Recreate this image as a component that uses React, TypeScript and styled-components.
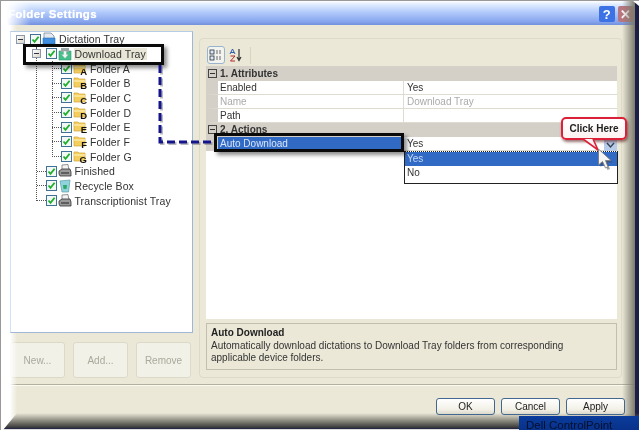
import React from "react"
import styled, { createGlobalStyle } from "styled-components"

const GlobalStyle = createGlobalStyle`
  html, body {
    margin: 0;
    padding: 0;
    background: #fff;
  }
`

const Win = styled.div`
  position: relative;
  display: flex;
  flex-direction: column;
  width: 639px;
  height: 430px;
  overflow: hidden;
  background: #ebe8d8;
  font-family: "Liberation Sans", Arial, sans-serif;
  font-size: 10px;
  color: #222;
  filter: blur(0.3px);
`

const TitleBar = styled.div`
  display: flex;
  align-items: center;
  flex: none;
  height: 25px;
  box-sizing: border-box;
  padding: 2px 5px 0 7px;
  border-top: 1px solid #999;
  border-left: 1px solid #999;
  background:
    linear-gradient(90deg, #fff 6px, rgba(255, 255, 255, 0) 30px),
    linear-gradient(#ffffff 0%, #e4eeff 12%, #b4ccfb 45%, #88a6ee 85%, #7390dc 100%);
  color: #fff;
  font-size: 11.5px;
  font-weight: bold;
  letter-spacing: 0.35px;
  text-shadow: 0 0 1px rgba(255, 255, 255, 0.9);
`

const TitleText = styled.span`
  flex: 1;
`

const CaptionButton = styled.div<{ $tone: string }>`
  display: flex;
  align-items: center;
  justify-content: center;
  width: 16px;
  height: 16px;
  margin-left: 3px;
  border-radius: 2px;
  background: ${p => p.$tone};
  font-size: 13px;
  font-weight: bold;
  text-shadow: none;
`

const Main = styled.div`
  display: flex;
  flex: none;
  height: 353px;
  box-sizing: border-box;
  padding: 6px 0 0 10px;
  gap: 6px;
`

const LeftColumn = styled.div`
  display: flex;
  flex-direction: column;
  width: 183px;
  gap: 9px;
`

const TreeBox = styled.div`
  position: relative;
  z-index: 2;
  height: 302px;
  box-sizing: border-box;
  border: 1px solid #9db8d6;
  border-left-color: #cfe2f6;
  border-top-color: #b7cde4;
  background: #fff;
  font-size: 10.5px;
`

const Branch = styled.div<{ $line: number; $bottom: number }>`
  position: relative;

  &::before {
    content: "";
    position: absolute;
    left: ${p => p.$line}px;
    top: 0;
    bottom: ${p => p.$bottom}px;
    border-left: 1px dotted #555;
  }
`

const Row = styled.div<{ $level: number }>`
  position: relative;
  display: flex;
  align-items: center;
  height: 14.67px;
  padding-left: ${p => 5 + p.$level * 15.5}px;
  white-space: nowrap;
`

const Slot = styled.div<{ $leaf?: boolean }>`
  display: flex;
  align-items: center;
  flex: none;
  width: 14px;
  height: 1px;
  box-sizing: border-box;
  ${p => (p.$leaf ? "margin-left: 5px; width: 9px; border-top: 1px dotted #555;" : "")}
`

const Expander = styled.div`
  display: flex;
  align-items: center;
  justify-content: center;
  flex: none;
  width: 9px;
  height: 9px;
  box-sizing: border-box;
  border: 1px solid #8a98a8;
  background: linear-gradient(135deg, #fff, #d8d4c8);

  &::after {
    content: "";
    width: 5px;
    height: 1px;
    background: #334;
  }
`

const Check = styled.div`
  display: flex;
  align-items: center;
  justify-content: center;
  flex: none;
  width: 11px;
  height: 11px;
  box-sizing: border-box;
  border: 1px solid #3f7296;
  background: #f4f8f4;
`

const IconWrap = styled.div`
  position: relative;
  flex: none;
  width: 14px;
  height: 14px;
  margin-left: 1px;
`

const Letter = styled.span`
  position: absolute;
  right: 0;
  bottom: -1px;
  color: #111;
  font-size: 9.5px;
  font-weight: bold;
  line-height: 10px;
`

const Label = styled.span<{ $mark?: boolean }>`
  margin-left: 2px;
  padding: 0 1px;
  letter-spacing: 0.1px;
  color: #333;
  background: ${p => (p.$mark ? "#e8e6d6" : "transparent")};
`

const ButtonRow = styled.div`
  display: flex;
  justify-content: flex-end;
  gap: 8px;
  padding-right: 2px;
`

const GhostButton = styled.div`
  display: flex;
  align-items: center;
  justify-content: center;
  width: 55px;
  height: 36px;
  box-sizing: border-box;
  border: 1px solid #dcd9c8;
  border-radius: 3px;
  background: #f2f1e8;
  color: #aaa99c;
`

const Panel = styled.div`
  display: flex;
  flex-direction: column;
  width: 423px;
  height: 340px;
  box-sizing: border-box;
  margin-top: 7px;
  padding: 5px 4px 7px 6px;
  border: 1px solid #dedac8;
  border-radius: 4px;
`

const Toolbar = styled.div`
  display: flex;
  align-items: flex-end;
  flex: none;
  height: 22px;
  gap: 2px;
  padding: 0 0 2px 1px;
  box-sizing: border-box;
`

const ToolButton = styled.div<{ $on?: boolean }>`
  display: flex;
  align-items: center;
  justify-content: center;
  width: 16px;
  height: 16px;
  border: 1px solid ${p => (p.$on ? "#9ab4d0" : "transparent")};
  border-radius: 3px;
  background: ${p => (p.$on ? "#f4f4ee" : "transparent")};
`

const ToolDivider = styled.div`
  width: 1px;
  height: 17px;
  margin-left: 3px;
  background: #d8d4c2;
`

const Grid = styled.div`
  flex: none;
  height: 253px;
  background: #fff;
`

const CategoryRow = styled.div`
  display: flex;
  align-items: center;
  height: 14.5px;
  gap: 3px;
  padding-left: 2px;
  background: #d4d0c8;
  font-weight: bold;
  color: #333;
`

const SmallBox = styled.div`
  display: flex;
  align-items: center;
  justify-content: center;
  width: 7px;
  height: 7px;
  border: 1px solid #444;

  &::after {
    content: "";
    width: 5px;
    height: 1px;
    background: #333;
  }
`

const PropRow = styled.div`
  display: flex;
  height: 14px;
  box-sizing: border-box;
  border-left: 12px solid #d4d0c8;
  border-bottom: 1px solid #dedbd0;
`

const PropName = styled.div<{ $dim?: boolean; $selected?: boolean }>`
  width: 186px;
  box-sizing: border-box;
  padding-left: 2px;
  line-height: 13px;
  border-right: 1px solid #dedbd0;
  color: ${p => (p.$selected ? "#d8e4f8" : p.$dim ? "#aaa" : "#333")};
  background: ${p => (p.$selected ? "#316ac5" : "transparent")};
`

const PropValue = styled.div<{ $dim?: boolean }>`
  flex: 1;
  padding-left: 3px;
  line-height: 13px;
  color: ${p => (p.$dim ? "#aaa" : "#333")};
`

const Description = styled.div`
  flex: none;
  height: 47px;
  box-sizing: border-box;
  margin-top: 4px;
  padding: 3px 4px;
  border: 1px solid #c2bfae;
  line-height: 12.5px;
  color: #333;
`

const DescriptionTitle = styled.div`
  font-weight: bold;
  color: #222;
`

const Separator = styled.div`
  flex: none;
  height: 2px;
  margin-top: 6px;
  background: linear-gradient(#b4b09e 50%, #fbfaf2 50%);
`

const Footer = styled.div`
  display: flex;
  justify-content: flex-end;
  gap: 6px;
  padding: 12px 14px 0 0;
`

const DialogButton = styled.div`
  position: relative;
  z-index: 3;
  display: flex;
  align-items: center;
  justify-content: center;
  width: 59px;
  height: 17px;
  box-sizing: border-box;
  border: 1px solid #42688f;
  border-radius: 3px;
  background: linear-gradient(#ffffff, #f2f0e6 70%, #dcd8cc);
  color: #222;
`

/* everything below sits over the dialog: annotations and the screenshot's edge */

const ValueArrow = styled.div`
  position: absolute;
  left: 604px;
  top: 139px;
  display: flex;
  align-items: center;
  justify-content: center;
  width: 13px;
  height: 12px;
  background: #b8cbe8;
`

const DropList = styled.div`
  position: absolute;
  left: 404px;
  top: 151px;
  width: 212px;
  height: 31px;
  border: 1px solid #222;
  border-top-style: dotted;
  background: #fff;
`

const DropItem = styled.div<{ $active?: boolean }>`
  height: 14px;
  padding-left: 2px;
  line-height: 14px;
  color: ${p => (p.$active ? "#c8d8f4" : "#333")};
  background: ${p => (p.$active ? "#316ac5" : "transparent")};
`

const Highlight = styled.div<{ $x: number; $y: number; $w: number; $h: number }>`
  position: absolute;
  z-index: 4;
  left: ${p => p.$x}px;
  top: ${p => p.$y}px;
  width: ${p => p.$w}px;
  height: ${p => p.$h}px;
  box-sizing: border-box;
  border: 3px solid #0a0a0a;
  box-shadow: 3px 3px 4px rgba(0, 0, 0, 0.45);
`

const Connector = styled.svg`
  position: absolute;
  z-index: 4;
  left: 150px;
  top: 60px;
`

const Callout = styled.div`
  position: absolute;
  left: 561px;
  top: 117px;
  display: flex;
  align-items: center;
  justify-content: center;
  width: 66px;
  height: 23px;
  box-sizing: border-box;
  border: 2px solid #dc2038;
  border-radius: 5px;
  background: linear-gradient(#ffffff, #fdf2f2);
  box-shadow: 1px 2px 3px rgba(70, 0, 0, 0.55);
  font-weight: bold;
  color: #222;
`

const CalloutTail = styled.svg`
  position: absolute;
  left: 581px;
  top: 137px;
`

const Pointer = styled.svg`
  position: absolute;
  left: 597px;
  top: 147px;
`

const LeftFade = styled.div`
  position: absolute;
  left: 0;
  top: 25px;
  bottom: 0;
  width: 16px;
  border-left: 1px solid #999;
  background: linear-gradient(90deg, #fff 55%, rgba(255, 255, 255, 0));
  pointer-events: none;
`

const RightShade = styled.div`
  position: absolute;
  right: 0;
  top: 1px;
  bottom: 0;
  width: 17px;
  background: linear-gradient(90deg, rgba(110, 110, 98, 0), #7c7b6c 76%, #1c2048 78%, #1a1e44);
`

const CornerCut = styled.div`
  position: absolute;
  right: 0;
  top: 1px;
  width: 6px;
  height: 5px;
  background: #fff;
  clip-path: polygon(0 0, 100% 0, 100% 100%);
`

const BottomShade = styled.div`
  position: absolute;
  left: 3px;
  right: 0;
  bottom: 0;
  height: 17px;
  background: linear-gradient(rgba(80, 80, 70, 0), #77766c 55%, #3a3a3c 85%, #1c2048 94%, #ddd 94%);
  clip-path: polygon(14px 0, 100% 0, 100% 100%, 0 100%);
`

const TaskTip = styled.div`
  position: absolute;
  z-index: 3;
  right: 0;
  bottom: 0;
  width: 120px;
  height: 14px;
  box-sizing: border-box;
  padding: 2px 0 0 7px;
  overflow: hidden;
  background: linear-gradient(#0a3c9c, #08328a);
  color: #04102e;
  font-size: 11.5px;
  line-height: 14px;
  white-space: nowrap;
`

const CheckMark = () => (
  <svg width="9" height="9" viewBox="0 0 9 9">
    <path d="M1.5 4.5 L3.5 6.8 L7.6 1.8" fill="none" stroke="#1fae2e" strokeWidth="1.8" />
  </svg>
)

const FolderIcon = ({ letter }: { letter: string }) => (
  <IconWrap>
    <svg width="13" height="13" viewBox="0 0 13 13">
      <path d="M1 3 L1 2 L5 2 L6 3 L12 3 L12 11 L1 11 Z" fill="#f4cf60" stroke="#d2a63a" strokeWidth="0.7" />
      <path d="M1 5 L12 5" stroke="#fff0b8" strokeWidth="1.2" />
    </svg>
    <Letter>{letter}</Letter>
  </IconWrap>
)

const TrayIcon = ({ kind }: { kind: string }) => (
  <IconWrap>
    {kind === "dictation" && (
      <svg width="14" height="14" viewBox="0 0 14 14">
        <path d="M2 1 L9 1 L12 4 L12 8 L2 8 Z" fill="#e4e8f0" stroke="#7a8aa0" strokeWidth="0.8" />
        <path d="M1 6 L13 6 L13 12 L1 12 Z" fill="#3f8fe0" stroke="#2a6cb0" strokeWidth="0.6" />
      </svg>
    )}
    {kind === "download" && (
      <svg width="14" height="14" viewBox="0 0 14 14">
        <path d="M1 4 L13 4 L13 13 L1 13 Z" fill="#45c08a" stroke="#2c9a70" strokeWidth="0.6" />
        <path d="M3 1 L11 1 L11 5 L3 5 Z" fill="#9aa8a8" />
        <path d="M5.5 4 L8.5 4 L8.5 7.5 L10.5 7.5 L7 11.5 L3.5 7.5 L5.5 7.5 Z" fill="#f2f6f2" stroke="#7aa89a" strokeWidth="0.4" />
      </svg>
    )}
    {kind === "printer" && (
      <svg width="14" height="14" viewBox="0 0 14 14">
        <path d="M4 1 L10 0.5 L11 6 L4 6 Z" fill="#f4f4f4" stroke="#666" strokeWidth="0.7" />
        <path d="M1 7 L4 5 L12 5 L13 8 L13 12 L2 12 L1 10 Z" fill="#9a9a9a" stroke="#333" strokeWidth="0.8" />
        <path d="M3 9 L11 9" stroke="#222" strokeWidth="1" />
      </svg>
    )}
    {kind === "recycle" && (
      <svg width="14" height="14" viewBox="0 0 14 14">
        <path d="M2 2 L12 1 L10.5 13 L4 13 Z" fill="#8fd4dc" stroke="#5a9ca8" strokeWidth="0.7" />
        <path d="M5 6 L9 6 L8.5 10 L5.5 10 Z" fill="#2fa86a" />
      </svg>
    )}
  </IconWrap>
)

const folders = ["A", "B", "C", "D", "E", "F", "G"]
const trays = [
  { name: "Finished", kind: "printer" },
  { name: "Recycle Box", kind: "recycle" },
  { name: "Transcriptionist Tray", kind: "printer" },
]

export default function App() {
  return (
    <>
      <GlobalStyle />
      <Win>
        <TitleBar>
          <TitleText>Folder Settings</TitleText>
          <CaptionButton $tone="#3d72e4">?</CaptionButton>
          <CaptionButton $tone="#b87680">✕</CaptionButton>
        </TitleBar>

        <Main>
          <LeftColumn>
            <TreeBox>
              <Row $level={0}>
                <Slot><Expander /></Slot>
                <Check><CheckMark /></Check>
                <TrayIcon kind="dictation" />
                <Label>Dictation Tray</Label>
              </Row>
              <Branch $line={25} $bottom={7}>
                <Row $level={1}>
                  <Slot><Expander /></Slot>
                  <Check><CheckMark /></Check>
                  <TrayIcon kind="download" />
                  <Label $mark>Download Tray</Label>
                </Row>
                <Branch $line={41} $bottom={7}>
                  {folders.map(letter => (
                    <Row $level={2} key={letter}>
                      <Slot $leaf />
                      <Check><CheckMark /></Check>
                      <FolderIcon letter={letter} />
                      <Label>{"Folder " + letter}</Label>
                    </Row>
                  ))}
                </Branch>
                {trays.map(tray => (
                  <Row $level={1} key={tray.name}>
                    <Slot $leaf />
                    <Check><CheckMark /></Check>
                    <TrayIcon kind={tray.kind} />
                    <Label>{tray.name}</Label>
                  </Row>
                ))}
              </Branch>
            </TreeBox>
            <ButtonRow>
              <GhostButton>New...</GhostButton>
              <GhostButton>Add...</GhostButton>
              <GhostButton>Remove</GhostButton>
            </ButtonRow>
          </LeftColumn>

          <Panel>
            <Toolbar>
              <ToolButton $on>
                <svg width="14" height="14" viewBox="0 0 14 14">
                  <rect x="1" y="2" width="4" height="4" fill="#dfe8f4" stroke="#234" strokeWidth="0.8" />
                  <rect x="1" y="8" width="4" height="4" fill="#dfe8f4" stroke="#234" strokeWidth="0.8" />
                  <path d="M7 3 H13 M7 5 H12 M7 9 H13 M7 11 H12" stroke="#667" strokeWidth="1" strokeDasharray="2 1" />
                </svg>
              </ToolButton>
              <ToolButton>
                <svg width="14" height="14" viewBox="0 0 14 14">
                  <path d="M1 6 L3.5 1 L6 6 M2 4.5 H5" fill="none" stroke="#2a5ca8" strokeWidth="1" />
                  <path d="M1.5 8 H6 L1.5 13 H6" fill="none" stroke="#b02a2a" strokeWidth="1" />
                  <path d="M10 1 V11 M8 9 L10 12.5 L12 9" fill="none" stroke="#333" strokeWidth="1.2" />
                </svg>
              </ToolButton>
              <ToolDivider />
            </Toolbar>

            <Grid>
              <CategoryRow><SmallBox />1. Attributes</CategoryRow>
              <PropRow>
                <PropName>Enabled</PropName>
                <PropValue>Yes</PropValue>
              </PropRow>
              <PropRow>
                <PropName $dim>Name</PropName>
                <PropValue $dim>Download Tray</PropValue>
              </PropRow>
              <PropRow>
                <PropName>Path</PropName>
                <PropValue />
              </PropRow>
              <CategoryRow><SmallBox />2. Actions</CategoryRow>
              <PropRow>
                <PropName $selected>Auto Download</PropName>
                <PropValue>Yes</PropValue>
              </PropRow>
            </Grid>

            <Description>
              <DescriptionTitle>Auto Download</DescriptionTitle>
              Automatically download dictations to Download Tray folders from corresponding
              <br />
              applicable device folders.
            </Description>
          </Panel>
        </Main>

        <Separator />
        <Footer>
          <DialogButton>OK</DialogButton>
          <DialogButton>Cancel</DialogButton>
          <DialogButton>Apply</DialogButton>
        </Footer>

        <ValueArrow>
          <svg width="9" height="7" viewBox="0 0 9 7">
            <path d="M1 1 L4.5 5 L8 1" fill="none" stroke="#345" strokeWidth="1.4" />
          </svg>
        </ValueArrow>
        <DropList>
          <DropItem $active>Yes</DropItem>
          <DropItem>No</DropItem>
        </DropList>

        <LeftFade />
        <RightShade />
        <CornerCut />
        <BottomShade />
        <TaskTip>Dell ControlPoint</TaskTip>

        <Highlight $x={23} $y={44} $w={141} $h={21} />
        <Highlight $x={214} $y={133} $w={190} $h={19} />
        <Connector width="70" height="90" viewBox="0 0 70 90">
          <path d="M10 5 V82 H64" fill="none" stroke="#555" strokeWidth="3" strokeDasharray="8 4" transform="translate(1.5 1.5)" opacity="0.4" />
          <path d="M10 5 V82 H64" fill="none" stroke="#14148c" strokeWidth="3" strokeDasharray="8 4" />
        </Connector>

        <Callout>Click Here</Callout>
        <CalloutTail width="20" height="15" viewBox="0 0 20 15">
          <path d="M2 2 L12 2 L17 13 Z" fill="#fdf2f2" />
          <path d="M2 2 L17 13 L12 2" fill="none" stroke="#dc2038" strokeWidth="1.6" />
        </CalloutTail>
        <Pointer width="16" height="24" viewBox="0 0 16 24">
          <path d="M2.5 3 L2.5 19 L6.5 15.5 L9.5 22 L12 21 L9.5 14.5 L15 14.5 Z" fill="#444" opacity="0.5" transform="translate(1 1)" />
          <path d="M1.5 2 L1.5 18 L5.5 14.5 L8.5 21 L11 20 L8.5 13.5 L14 13.5 Z" fill="#f4f4f4" stroke="#777" strokeWidth="0.8" />
        </Pointer>
      </Win>
    </>
  )
}
